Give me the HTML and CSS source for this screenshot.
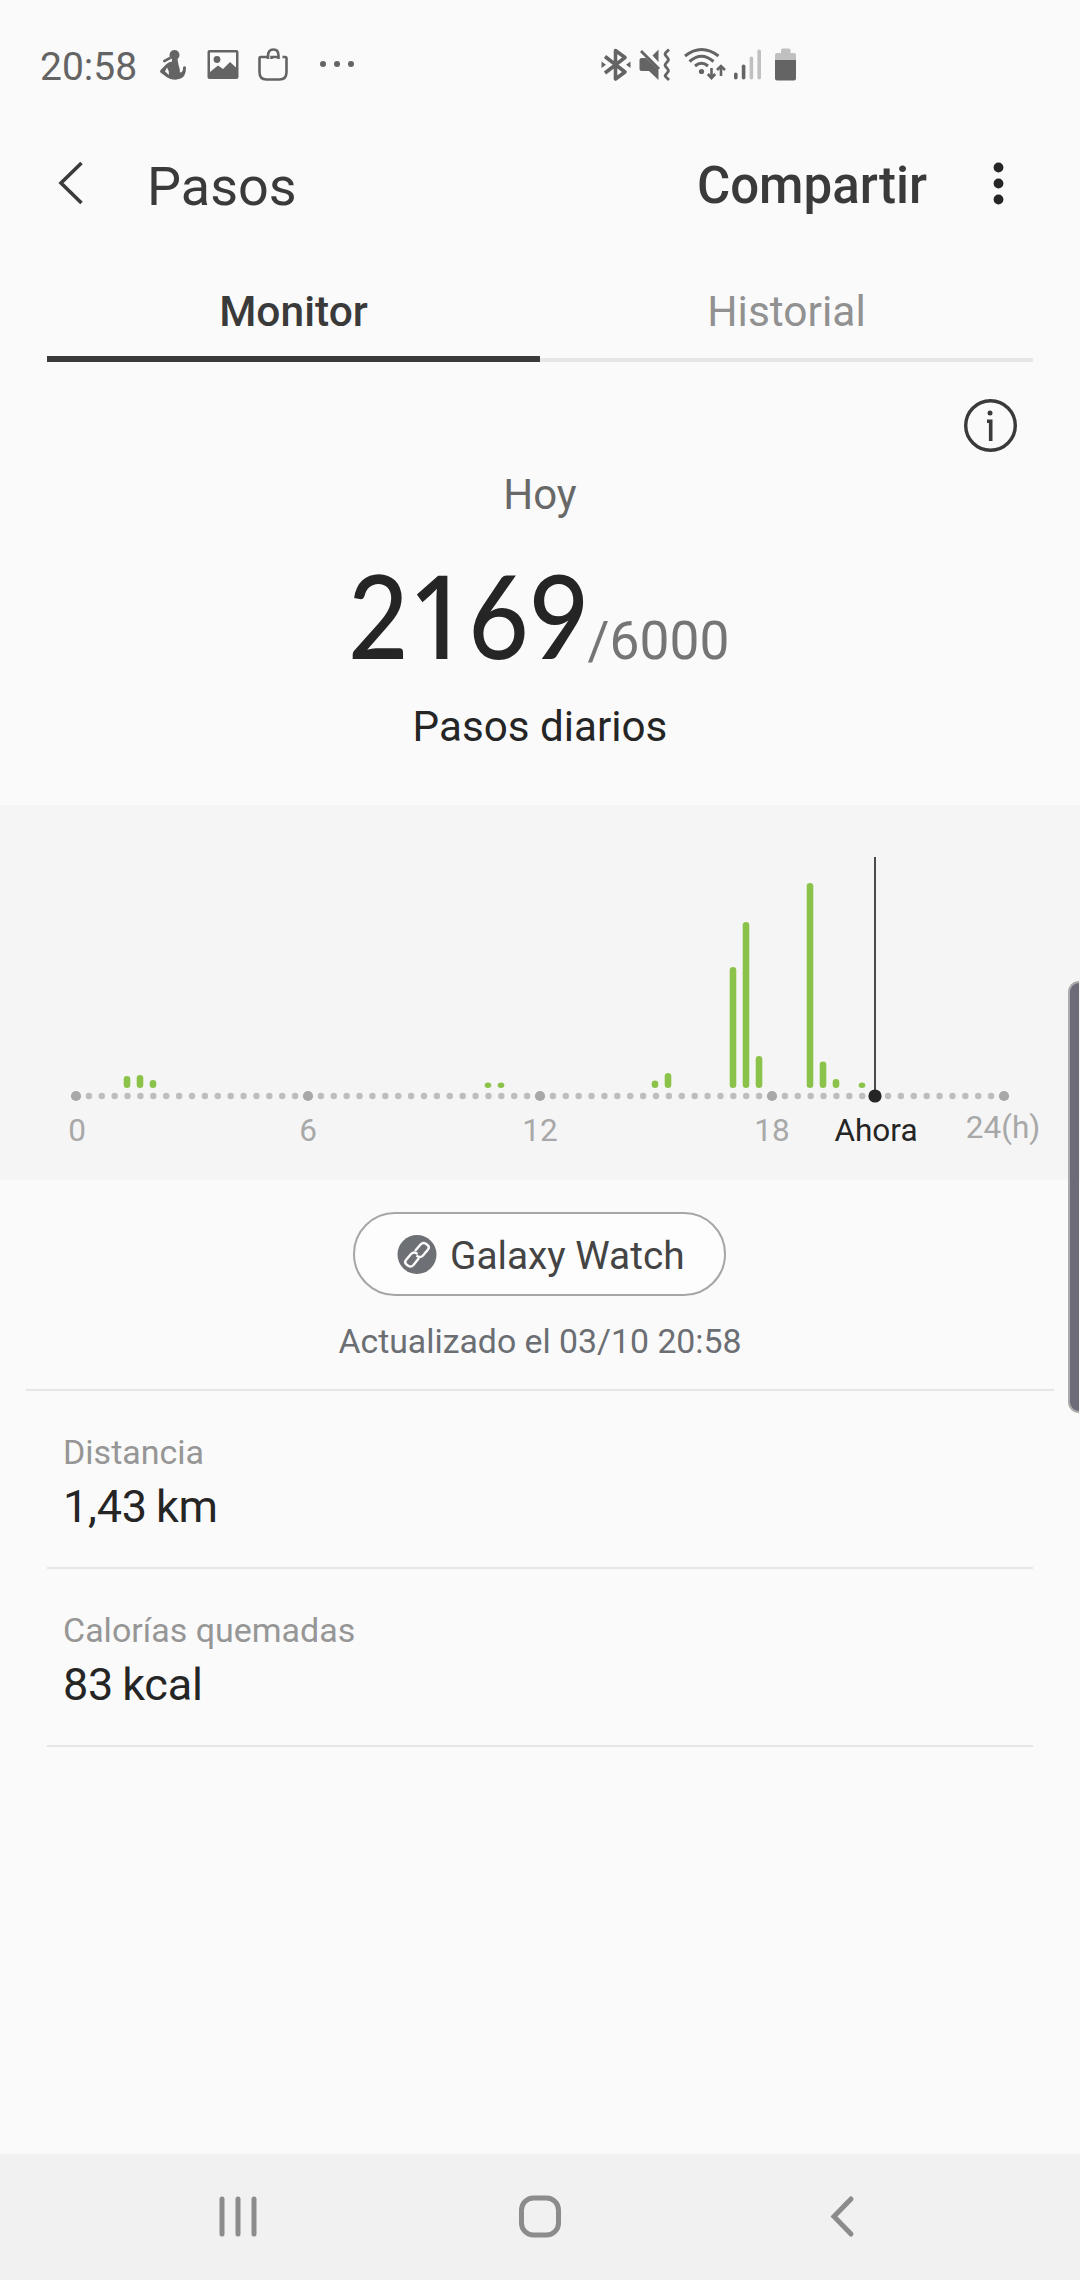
FILE: index.html
```html
<!DOCTYPE html>
<html lang="es">
<head>
    <meta charset="UTF-8">
    <meta name="viewport" content="width=device-width, initial-scale=1.0">
    <title>Pasos</title>
    <link rel="stylesheet" href="styles.css">
</head>
<body>
    <div class="status">
        <span class="time">20:58</span>
        <svg class="i_walk" width="28" height="36" viewBox="0 0 28 36">
            <circle cx="14.500" cy="8" r="5"/>
            <path d="M10 9.5L3.500 13Q2 15 4.500 15.500L11 12ZM12 12H17.500L18.500 18Q20 22 20 25.500Q23.500 25 23 20Q26 18 26 21Q26 30.500 19 32Q12 34 6.500 30L.5 25.500Q-.5 24 1 22.500L6.500 17Q9 14.500 12 14.500ZM7 20.500L5 24.500L9 28Q9 23 7 20.500Z" fill-rule="evenodd"/>
        </svg>
        <svg class="i_photo" width="32" height="36" viewBox="0 0 32 36">
            <path d="M2.500 3H29.500Q31.500 3 31.500 5V30Q31.500 32 29.500 32H2.500Q.5 32 .5 30V5Q.5 3 2.500 3ZM3 5.500V25L11 18.500L16 22L23 15L29 20.500V5.500Z" fill-rule="evenodd"/>
            <circle cx="10" cy="12.500" r="3.400"/>
        </svg>
        <svg class="i_bag" width="32" height="36" viewBox="0 0 32 36">
            <path d="M10.500 10H3.500Q2.500 10 2.500 11.500V25Q2.500 32.500 9.500 32.500H22.500Q29.500 32.500 29.500 25V11.500Q29.500 10 28 10H25.500M11 12V9Q11 2.500 16.500 2.500Q21.500 2.500 21.500 8.500V12M22 10H14.500V12" fill="none" stroke="#646464" stroke-width="2.600"/>
        </svg>
        <svg class="i_dots" width="36" height="36" viewBox="0 0 36 36">
            <circle cx="4" cy="17" r="3"/><circle cx="18" cy="17" r="3"/><circle cx="32" cy="17" r="3"/>
        </svg>
        <svg class="i_bt" width="30" height="36" viewBox="0 0 30 36">
            <path d="M4 9.500L24 25L14.500 32V3.500L24 10.500L4 26" fill="none" stroke="#646464" stroke-width="3.600" stroke-linejoin="round"/>
            <path d="M.5 14.500L5 17.700L.5 21ZM29.500 14.500L25 17.700L29.500 21Z"/>
        </svg>
        <svg class="i_mute" width="32" height="36" viewBox="0 0 32 36">
            <path d="M.5 13Q.5 11 2.500 11H7L19.500 23V33L10 24H2.500Q.5 24 .5 22ZM13.500 8.500L19.500 2.500V15Z"/>
            <path d="M2 4L20 22" stroke="#646464" stroke-width="3" fill="none"/>
            <path d="M30 2.500L26.500 6Q25.500 7.500 27 9L29 11.500Q30 13 28.500 14.500L26.500 17Q25.500 18.500 27 20L29 22.500Q30 24 28.500 25.500L26.500 28Q25.500 29 27 30L30 33" fill="none" stroke="#646464" stroke-width="2.800"/>
        </svg>
        <svg class="i_wifi" width="42" height="36" viewBox="0 0 42 36">
            <path d="M1 9Q17.500-4 34.500 9M5.500 14.500Q17.500 4 29.500 14.500M11 19Q17.500 13.500 24 19" fill="none" stroke="#646464" stroke-width="3"/>
            <circle cx="17.500" cy="24.500" r="2.600"/>
            <path d="M27.500 21V31M23.800 27L27.500 31L31.200 27M37 29V19M33 23L37 19L41 23" fill="none" stroke="#646464" stroke-width="2.600"/>
        </svg>
        <svg class="i_signal" width="28" height="36" viewBox="0 0 28 36">
            <rect x="0" y="25.500" width="3.600" height="7" rx="1.800"/>
            <rect x="7.800" y="17.500" width="3.600" height="15" rx="1.800"/>
            <rect x="15.600" y="9.500" width="3.600" height="23" rx="1.800" fill="#c0c0c0"/>
            <rect x="23.400" y="2.500" width="3.600" height="30" rx="1.800" fill="#c0c0c0"/>
        </svg>
        <svg class="i_battery" width="22" height="36" viewBox="0 0 22 36">
            <path d="M0 13V8Q0 6 2 6H6V3Q6 1.500 7.500 1.500H14Q15.500 1.500 15.500 3V6H19Q21 6 21 8V13Z" fill="#c0c0c0"/>
            <path d="M0 13H21V31.500Q21 33.500 19 33.500H2Q0 33.500 0 31.500Z"/>
        </svg>
    </div>

    <div class="header">
        <svg class="back" width="26" height="44" viewBox="0 0 26 44"><path d="M23.500 2L3 22L23.500 42" fill="none" stroke="#3a3a3a" stroke-width="3.600"/></svg>
        <h1>Pasos</h1>
        <a class="share">Compartir</a>
        <svg class="more" width="12" height="44" viewBox="0 0 12 44">
            <circle cx="5.500" cy="6.500" r="4.900"/><circle cx="5.500" cy="22.500" r="4.900"/><circle cx="5.500" cy="38.500" r="4.900"/>
        </svg>
    </div>

    <ul class="tabs">
        <li class="active">Monitor</li>
        <li>Historial</li>
    </ul>

    <div class="summary">
        <svg class="info" width="54" height="54" viewBox="0 0 54 54">
            <circle cx="27.500" cy="26.500" r="24.800" fill="none" stroke="#3a3a3a" stroke-width="3.400"/>
            <circle cx="27" cy="14" r="2.500" fill="#3a3a3a"/>
            <path d="M24 22.300H27.700V42" fill="none" stroke="#3a3a3a" stroke-width="3.600"/>
        </svg>
        <p class="day">Hoy</p>
        <p class="count"><span class="steps">2<span class="one">1</span>69</span><span class="goal">/6000</span></p>
        <p class="caption">Pasos diarios</p>
    </div>

    <div class="chart">
        <svg id="chart" width="1080" height="375" viewBox="0 0 1080 375">
            <g id="bars" class="bars"></g>
            <g id="dots" class="dots"></g>
            <rect class="now_line" x="874" y="52" width="2" height="239"/>
            <circle class="now_dot" cx="875" cy="291" r="6.600"/>
            <text x="77" y="336">0</text>
            <text x="308" y="336">6</text>
            <text x="540" y="336">12</text>
            <text x="772" y="336">18</text>
            <text class="now" x="876" y="336">Ahora</text>
            <text x="1003" y="333">24(h)</text>
        </svg>
    </div>

    <div class="source">
        <a class="device">
            <svg width="40" height="40" viewBox="0 0 40 40">
                <circle cx="20" cy="20.500" r="19.500" fill="#6d7074"/>
                <g fill="none" stroke="#fdfdfd" stroke-width="2.400">
                    <path d="M18 17L23.500 10.500Q26 8 28.500 9.500L30.500 11Q33 13 31 15.500L26 21.500Q23.500 24 21 22.500L19.500 21.500"/>
                    <path d="M22 24L16.500 31Q14 33.500 11.500 32L9.500 30.500Q7 28.500 9 26L14 20Q16.500 17.500 19 19L20.500 20"/>
                </g>
            </svg>
            <span>Galaxy Watch</span>
        </a>
        <p class="updated">Actualizado el 03/10 20:58</p>
    </div>

    <div class="stats">
        <div class="stat">
            <p class="label">Distancia</p>
            <p class="value">1,43&#8201;km</p>
        </div>
        <div class="stat">
            <p class="label">Calorías quemadas</p>
            <p class="value">83&#8201;kcal</p>
        </div>
    </div>

    <div class="navbar">
        <svg width="38" height="44" viewBox="0 0 38 44"><path d="M3 4V39M19 4V39M35 4V39" stroke="#8c8c8c" stroke-width="5" stroke-linecap="round"/></svg>
        <svg width="44" height="44" viewBox="0 0 44 44"><rect x="3.500" y="3" width="37" height="37" rx="12" fill="none" stroke="#8c8c8c" stroke-width="5"/></svg>
        <svg width="26" height="44" viewBox="0 0 26 44"><path d="M22 4L5 21.500L22 39" fill="none" stroke="#8c8c8c" stroke-width="5" stroke-linecap="round"/></svg>
    </div>

    <div class="edge"></div>

    <script>
        var ns = "http://www.w3.org/2000/svg";
        var bars = document.getElementById("bars");
        var dots = document.getElementById("dots");

        // [x, height]
        var data = [[127,12],[140,13],[153,8],[488,5.5],[501,5.5],[655,7.5],[668,15],[733,121],[746,166],[759,32],[810,205],[823,26.5],[836,9],[862,5.5]];

        for(var i=0;i<data.length;i++){
            var rect = document.createElementNS(ns, "rect");
            rect.setAttribute("x", data[i][0] - 3.3);
            rect.setAttribute("y", 283 - data[i][1]);
            rect.setAttribute("width", 6.6);
            rect.setAttribute("height", data[i][1]);
            rect.setAttribute("rx", 3.3);
            rect.setAttribute("ry", Math.min(3.3, data[i][1] / 2));
            bars.appendChild(rect);
        }

        // one dot every 20 minutes, a big one every 6 hours
        for(var j=0;j<=72;j++){
            var dot = document.createElementNS(ns, "circle");
            dot.setAttribute("cx", 76 + j * 928 / 72);
            dot.setAttribute("cy", 291);
            dot.setAttribute("r", j % 18 == 0 ? 5.1 : 3.2);
            if(j % 18 == 0){
                dot.setAttribute("class", "big");
            }
            dots.appendChild(dot);
        }
    </script>
</body>
</html>
```
FILE: styles.css
```css
*{
    margin: 0;
    padding: 0;
    box-sizing: border-box;
}
body{
    width: 1080px;
    height: 2280px;
    display: flex;
    flex-direction: column;
    position: relative;
    overflow: hidden;
    background: #fafafa;
    color: #252525;
    font-family: Roboto, "Noto Sans", sans-serif;
}
svg{
    display: block;
    flex: none;
}
/* 状态栏 */
.status{
    height: 130px;
    padding-left: 40px;
    display: flex;
    align-items: center;
    fill: #646464;
    color: #646464;
}
.time{
    width: 96px;
    padding-top: 4px;
    font-size: 39px;
}
.i_walk{
    margin-left: 24px;
}
.i_photo{
    margin-left: 19px;
}
.i_bag{
    margin-left: 18px;
}
.i_dots{
    margin-left: 30px;
}
.i_bt{
    margin-left: 246px;
}
.i_mute{
    margin-left: 8px;
}
.i_wifi{
    margin-left: 13px;
}
.i_signal{
    margin-left: 8px;
}
.i_battery{
    margin-left: 13px;
}
.header{
    height: 106px;
    padding: 0 75px 0 58px;
    display: flex;
    align-items: center;
    color: #3a3a3a;
}
.header h1{
    margin-left: 63px;
    padding-top: 6px;
    font-size: 54px;
    font-weight: 400;
}
.share{
    margin-left: auto;
    padding-top: 4px;
    font-size: 51px;
    font-weight: 500;
}
.more{
    margin-left: 66px;
    fill: #252525;
}
.tabs{
    height: 126px;
    margin: 0 47px;
    display: flex;
    list-style: none;
}
.tabs li{
    flex: 1;
    padding-top: 51px;
    border-bottom: 4px solid #e6e6e6;
    text-align: center;
    font-size: 42.5px;
    line-height: 50px;
    color: #919191;
}
.tabs .active{
    border-bottom: 6px solid #3a3a3a;
    font-weight: 500;
    color: #3a3a3a;
}
.summary{
    height: 443px;
    padding-top: 37px;
    display: flex;
    flex-direction: column;
    align-items: center;
}
.info{
    align-self: flex-end;
    margin-right: 63px;
}
.day{
    margin-top: 17px;
    font-size: 42px;
    line-height: 50px;
    color: #686868;
}
.count{
    height: 182px;
    display: flex;
    align-items: baseline;
    line-height: 189px;
}
.steps{
    width: 240px;
    margin-left: -3px;
    font-family: Lato, Roboto, sans-serif;
    font-size: 116px;
    font-weight: 500;
    transform: scaleX(.9);
    transform-origin: 0 0;
}
.steps .one{
    font-family: "Noto Sans", sans-serif;
}
.goal{
    font-size: 53.3px;
    color: #757575;
}
.caption{
    font-size: 42.2px;
    line-height: 50px;
}
.chart{
    height: 375px;
    background: #f5f5f5;
}
.chart text{
    font-size: 31.5px;
    text-anchor: middle;
    fill: #a8a8a8;
}
.chart .now{
    fill: #252525;
}
.bars{
    fill: #8bc34a;
}
.dots{
    fill: #bdbdbd;
}
.dots .big{
    fill: #a8a8a8;
}
.now_line{
    fill: #4a4a4a;
}
.now_dot{
    fill: #252525;
}
.source{
    height: 211px;
    margin: 0 26px;
    padding-top: 32px;
    display: flex;
    flex-direction: column;
    align-items: center;
    border-bottom: 2px solid #e6e6e6;
}
.device{
    width: 373px;
    height: 84px;
    margin-right: 1px;
    padding-left: 42px;
    display: flex;
    align-items: center;
    border: 2px solid #a6a6a6;
    border-radius: 42px;
    background: #fdfdfd;
    font-size: 38.8px;
    color: #444;
}
.device span{
    margin-left: 13px;
    padding-top: 3px;
}
.updated{
    margin-top: 26px;
    font-size: 33.8px;
    line-height: 40px;
    color: #6b6e72;
}
.stats{
    flex: 1;
    padding: 0 47px;
}
.stat{
    height: 178px;
    padding: 40px 16px 0;
    border-bottom: 2px solid #e6e6e6;
}
.label{
    font-size: 34px;
    line-height: 42px;
    color: #969696;
}
.value{
    font-size: 45px;
    line-height: 68px;
    word-spacing: -1px;
    letter-spacing: -.2px;
}
.navbar{
    height: 126px;
    padding: 0 225px 0 219px;
    display: flex;
    align-items: center;
    justify-content: space-between;
    background: #f1f1f1;
}
.navbar svg:nth-child(2){
    margin-right: 7px;
}
/* 侧边把手，浮在内容上面 */
.edge{
    position: absolute;
    top: 981px;
    right: 1px;
    width: 11px;
    height: 432px;
    border: 2px solid #aaa;
    border-right: 0;
    border-radius: 12px 0 0 12px;
    background: #6d6a7a;
}
```
